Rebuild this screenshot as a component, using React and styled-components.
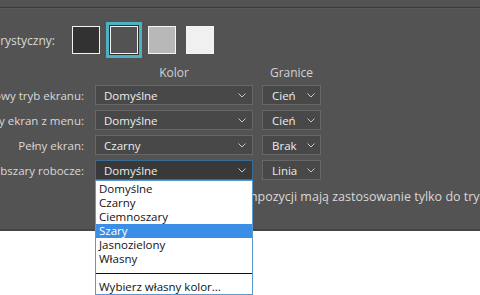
import React from "react";
import styled, { createGlobalStyle, css } from "styled-components";

const GlobalStyle = createGlobalStyle`
  html, body {
    margin: 0;
    padding: 0;
    background: #ffffff;
  }
  body {
    font-family: "Open Sans", "Noto Sans", sans-serif;
  }
`;

const Page = styled.div`
  width: 480px;
  height: 295px;
  overflow: hidden;
  background: #ffffff;
`;

const Panel = styled.div`
  width: 480px;
  height: 231px;
  background: #535353;
  padding-top: 7px;
  box-sizing: border-box;
  border-bottom: 2px solid #464646;
  position: relative;
  color: #dcdcdc;
  font-size: 11.5px;
`;

const Rule = styled.div`
  height: 1px;
  background: #3b3b3b;
  box-shadow: 0 1px 0 #5a5a5a;
`;

const ThemeRow = styled.div`
  display: flex;
  align-items: center;
  height: 36px;
  margin-top: 14px;
`;

const ThemeLabel = styled.div`
  width: 55px;
  flex: none;
  display: flex;
  justify-content: flex-end;
  white-space: nowrap;
  margin-right: 17px;
  color: #d8d8d8;
  font-size: 12px;
`;

const Swatches = styled.div`
  display: flex;
  gap: 10px;
`;

const Swatch = styled.div`
  width: 28px;
  height: 28px;
  box-sizing: border-box;
  border: 1px solid #f4f4f4;
  background: ${(p) => p.$fill};
  ${(p) =>
    p.$selected &&
    css`
      box-shadow: 0 0 0 1px #2e2e2e, 0 0 0 4px #4db3c3;
    `}
`;

const Grid = styled.div`
  display: grid;
  grid-template-columns: 86px 158px 59px;
  column-gap: 9px;
  row-gap: 5px;
  margin-top: 7px;
`;

const Header = styled.div`
  grid-column: ${(p) => p.$col};
  height: 16px;
  line-height: 16px;
  text-align: center;
  color: #d2d2d2;
  font-size: 12px;
  margin-bottom: -1px;
`;

const Label = styled.div`
  height: 20px;
  display: flex;
  align-items: center;
  justify-content: flex-end;
  white-space: nowrap;
  color: #d8d8d8;
  padding-right: 2px;
`;

const Select = styled.div`
  position: relative;
  height: 20px;
  box-sizing: border-box;
  border: 1px solid ${(p) => (p.$focused ? "#3a6d96" : "#676767")};
  background: ${(p) => (p.$focused ? "#393939" : "#484848")};
  display: flex;
  align-items: center;
  justify-content: space-between;
  padding: 0 ${(p) => p.$pr || 6}px 0 ${(p) => p.$pl || 8}px;
  color: #ededed;
  white-space: nowrap;
`;

const Chevron = () => (
  <svg width="8" height="5" viewBox="0 0 8 5">
    <polyline
      points="0.5,0.5 4,4 7.5,0.5"
      fill="none"
      stroke="#c6c6c6"
      strokeWidth="1"
    />
  </svg>
);

const List = styled.div`
  position: absolute;
  top: 100%;
  left: -1px;
  right: -1px;
  margin-top: 1px;
  background: #ffffff;
  border: 1px solid #5a9bd0;
  padding-top: 1px;
  z-index: 5;
  font-size: 11.5px;
  color: #111111;
`;

const Item = styled.div`
  height: 14px;
  line-height: 14px;
  padding-left: 3px;
  background: ${(p) => (p.$active ? "#3a8ee6" : "transparent")};
  color: ${(p) => (p.$active ? "#ffffff" : "#111111")};
`;

const Separator = styled.div`
  height: 1px;
  background: #111111;
  margin: 7px 0 6px;
`;

const Note = styled.div`
  margin-top: 8px;
  margin-left: 95px;
  white-space: nowrap;
  color: #d8d8d8;
  font-size: 12.5px;
`;

const rows = [
  { label: "Standardowy tryb ekranu:", color: "Domyślne", border: "Cień" },
  { label: "Pełny ekran z menu:", color: "Domyślne", border: "Cień" },
  { label: "Pełny ekran:", color: "Czarny", border: "Brak" },
  { label: "Obszary robocze:", color: "Domyślne", border: "Linia", open: true },
];

const options = ["Domyślne", "Czarny", "Ciemnoszary", "Szary", "Jasnozielony", "Własny"];

export default function App() {
  return (
    <Page>
      <GlobalStyle />
      <Panel>
        <Rule />
        <ThemeRow>
          <ThemeLabel>
            <span>Motyw kolorystyczny:</span>
          </ThemeLabel>
          <Swatches>
            <Swatch $fill="#323232" />
            <Swatch $fill="#535353" $selected />
            <Swatch $fill="#b8b8b8" />
            <Swatch $fill="#f0f0f0" />
          </Swatches>
        </ThemeRow>
        <Grid>
          <Header $col={2}>Kolor</Header>
          <Header $col={3}>Granice</Header>
          {rows.map((r) => (
            <React.Fragment key={r.label}>
              <Label>
                <span>{r.label}</span>
              </Label>
              <Select $focused={r.open}>
                <span>{r.color}</span>
                <Chevron />
                {r.open && (
                  <List>
                    {options.map((o) => (
                      <Item key={o} $active={o === "Szary"}>
                        {o}
                      </Item>
                    ))}
                    <Separator />
                    <Item>Wybierz własny kolor...</Item>
                  </List>
                )}
              </Select>
              <Select $pl={9} $pr={5}>
                <span>{r.border}</span>
                <Chevron />
              </Select>
            </React.Fragment>
          ))}
        </Grid>
        <Note>
          Kolor tła obszaru pola i kompozycji mają zastosowanie tylko do trybu GPU.
        </Note>
      </Panel>
    </Page>
  );
}
